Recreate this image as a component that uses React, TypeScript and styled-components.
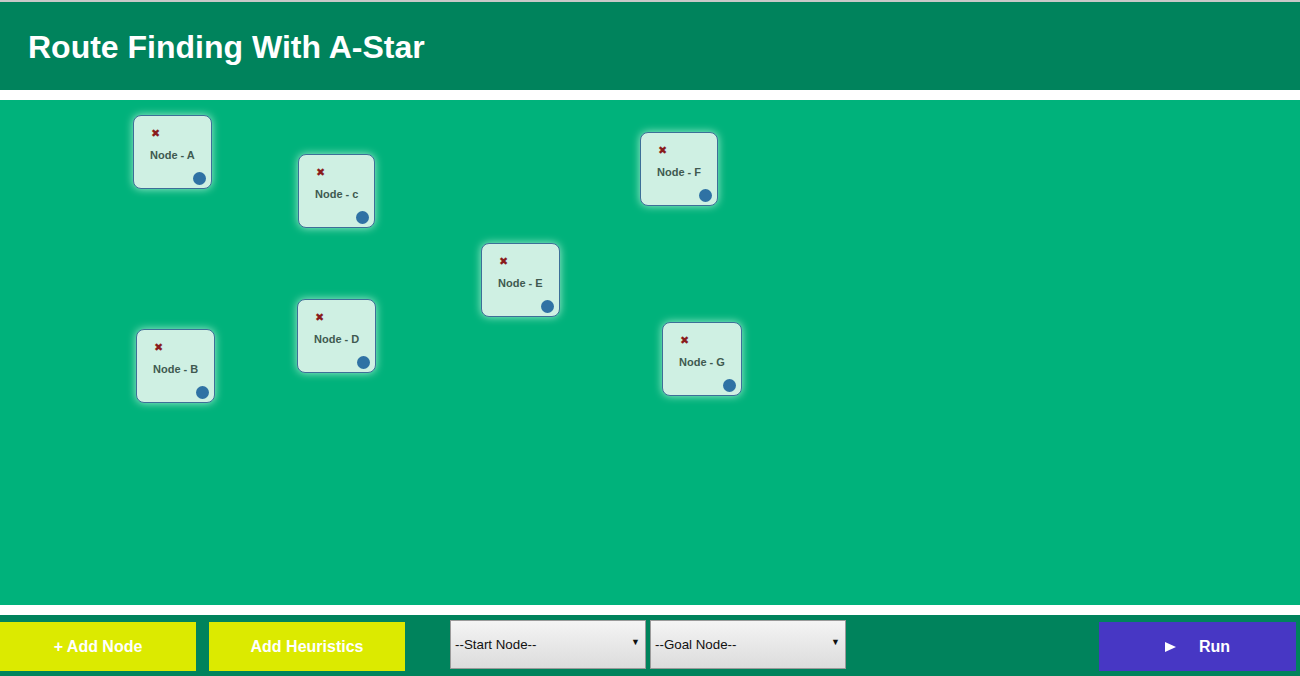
import React from "react";
import styled, { createGlobalStyle } from "styled-components";

const GlobalStyle = createGlobalStyle`
  html, body {
    margin: 0;
    padding: 0;
    background: #ffffff;
    font-family: "Liberation Sans", Arial, sans-serif;
  }
`;

const Page = styled.div`
  display: flex;
  flex-direction: column;
  width: 1300px;
  height: 676px;
  overflow: hidden;
  border-top: 2px solid #c8c8c8;
  box-sizing: border-box;
`;

const Header = styled.header`
  height: 88px;
  background: #00835c;
  display: flex;
  align-items: center;
  padding-left: 28px;
  padding-top: 3px;
  box-sizing: border-box;
  margin-bottom: 10px;
`;

const Title = styled.h1`
  margin: 0;
  color: #ffffff;
  font-size: 32px;
  font-weight: bold;
`;

const Canvas = styled.main`
  position: relative;
  height: 505px;
  background: #00b27b;
  margin-bottom: 10px;
`;

const NodeCard = styled.div`
  position: absolute;
  height: 74px;
  padding: 0 16px;
  box-sizing: border-box;
  background: #cff0e3;
  border: 1px solid #3d6f98;
  border-radius: 8px;
  box-shadow: 0 0 9px rgba(220, 255, 235, 0.75);
  display: flex;
  flex-direction: column;
  align-items: center;
`;

const Remove = styled.span`
  position: absolute;
  left: 17px;
  top: 11px;
  color: #8a1c1c;
  font-size: 11px;
  line-height: 12px;
`;

const NodeLabel = styled.span`
  margin-top: 33px;
  color: #3f5a50;
  font-size: 11px;
  font-weight: bold;
  white-space: nowrap;
`;

const Handle = styled.span`
  position: absolute;
  right: 5px;
  bottom: 3px;
  width: 13px;
  height: 13px;
  border-radius: 50%;
  background: #2f72a4;
`;

const Footer = styled.footer`
  flex: 1;
  background: #00835c;
  display: flex;
  align-items: flex-start;
  padding-top: 7px;
`;

const ActionButton = styled.button<{ $bg: string; $width: number; $gap: number }>`
  width: ${(p) => p.$width}px;
  height: 49px;
  margin-right: ${(p) => p.$gap}px;
  border: none;
  background: ${(p) => p.$bg};
  color: #ffffff;
  font-family: "Liberation Sans", Arial, sans-serif;
  font-size: 16px;
  font-weight: bold;
  display: flex;
  align-items: center;
  justify-content: center;
  gap: 23px;
  padding: 0;
`;

const SelectBox = styled.div<{ $gap: number }>`
  position: relative;
  width: 196px;
  height: 49px;
  margin-top: -2px;
  margin-right: ${(p) => p.$gap}px;
  box-sizing: border-box;
  border: 1px solid #9a9a9a;
  background: linear-gradient(#f4f4f4, #dcdcdc);
  display: flex;
  align-items: center;
  padding-left: 4px;
  font-size: 13.33px;
  color: #111;
`;

const Caret = styled.span`
  position: absolute;
  right: 5px;
  top: 16px;
  font-size: 9px;
  color: #111;
`;

const Spacer = styled.div`
  flex: 1;
`;

const PlayTriangle = styled.span`
  width: 0;
  height: 0;
  border-left: 11px solid #ffffff;
  border-top: 5px solid transparent;
  border-bottom: 5px solid transparent;
`;

const nodes = [
  { label: "Node - A", x: 133, y: 115 },
  { label: "Node - c", x: 298, y: 154 },
  { label: "Node - F", x: 640, y: 132 },
  { label: "Node - E", x: 481, y: 243 },
  { label: "Node - B", x: 136, y: 329 },
  { label: "Node - D", x: 297, y: 299 },
  { label: "Node - G", x: 662, y: 322 },
];

export default function App() {
  return (
    <>
      <GlobalStyle />
      <Page>
        <Header>
          <Title>Route Finding With A-Star</Title>
        </Header>
        <Canvas>
          {nodes.map((n) => (
            <NodeCard key={n.label} style={{ left: n.x, top: n.y - 100 }}>
              <Remove>✖</Remove>
              <NodeLabel>{n.label}</NodeLabel>
              <Handle />
            </NodeCard>
          ))}
        </Canvas>
        <Footer>
          <ActionButton $bg="#dcea00" $width={196} $gap={13}>
            + Add Node
          </ActionButton>
          <ActionButton $bg="#dcea00" $width={196} $gap={45}>
            Add Heuristics
          </ActionButton>
          <SelectBox $gap={4}>
            --Start Node--
            <Caret>▼</Caret>
          </SelectBox>
          <SelectBox $gap={0}>
            --Goal Node--
            <Caret>▼</Caret>
          </SelectBox>
          <Spacer />
          <ActionButton $bg="#4737c4" $width={197} $gap={4}>
            <PlayTriangle />
            <span>Run</span>
          </ActionButton>
        </Footer>
      </Page>
    </>
  );
}
